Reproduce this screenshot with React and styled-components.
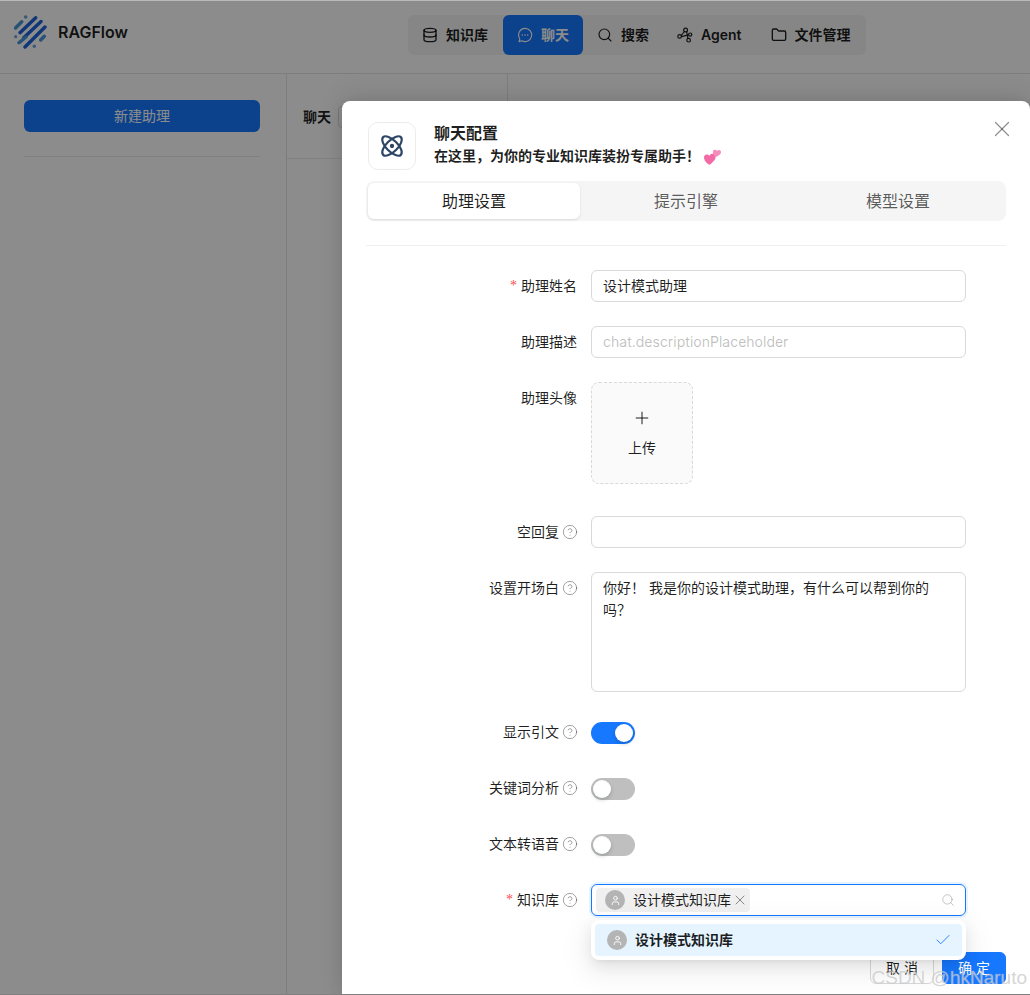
import React from 'react';
import styled, { createGlobalStyle } from 'styled-components';
import { Atom, Check, CircleHelp, Database, Folder, Plus, Search, User, X } from 'lucide-react';

const GlobalStyle = createGlobalStyle`
  html, body {
    margin: 0;
    padding: 0;
    background: #fff;
    overflow: hidden;
  }
  body {
    font-family: Inter, "Noto Sans CJK SC", sans-serif;
    font-size: 14px;
    line-height: 22px;
    color: rgba(0, 0, 0, 0.88);
  }
  * {
    box-sizing: border-box;
  }
`;

const Page = styled.div`
  position: relative;
  width: 1030px;
  height: 995px;
  overflow: hidden;
`;

const Header = styled.header`
  height: 74px;
  display: flex;
  align-items: flex-start;
  border-bottom: 1px solid #e4e4e4;
`;

const Brand = styled.div`
  width: 408px;
  display: flex;
  align-items: center;
  gap: 10px;
  padding: 15px 0 0 14px;
  font-size: 16px;
  font-weight: 600;
`;

const Nav = styled.nav`
  display: flex;
  width: 458px;
  height: 40px;
  margin-top: 15px;
  background: #f4f4f4;
  border-radius: 6px;
`;

const NavItem = styled.div`
  display: flex;
  align-items: center;
  gap: 8px;
  padding: 0 14px;
  border-radius: 6px;
  font-weight: 600;
  background: ${(p) => (p.$active ? '#1677ff' : 'transparent')};
  color: ${(p) => (p.$active ? '#fff' : 'rgba(0, 0, 0, 0.88)')};

  &:first-child,
  &:nth-child(4) {
    padding-right: 15px;
  }
`;

const Body = styled.div`
  display: flex;
  height: 921px;
`;

const Sidebar = styled.aside`
  width: 287px;
  padding: 26px 26px 0 24px;
  border-right: 1px solid #e4e4e4;
`;

const PrimaryWide = styled.div`
  height: 32px;
  background: #1677ff;
  border-radius: 6px;
  color: #fff;
  display: flex;
  align-items: center;
  justify-content: center;
`;

const SideDivider = styled.div`
  height: 1px;
  background: #eaeaea;
  margin-top: 24px;
`;

const ListColumn = styled.section`
  width: 221px;
  border-right: 1px solid #e4e4e4;
`;

const ListHead = styled.div`
  height: 85px;
  display: flex;
  align-items: center;
  gap: 7px;
  padding: 1px 0 0 16px;
  font-weight: 600;
  border-bottom: 1px solid #eaeaea;
`;

const Count = styled.span`
  width: 24px;
  height: 22px;
  border: 1px solid #d9d9d9;
  border-radius: 4px;
`;

const Mask = styled.div`
  position: absolute;
  inset: 0;
  background: rgba(0, 0, 0, 0.45);
`;

const Modal = styled.div`
  position: absolute;
  left: 342px;
  top: 101px;
  bottom: 0;
  width: 688px;
  padding: 21px 24px 0;
  background: #fff;
  border-radius: 8px 8px 0 0;
  box-shadow: 0 6px 16px rgba(0, 0, 0, 0.08), 0 -6px 24px rgba(0, 0, 0, 0.1);
`;

const CloseButton = styled.div`
  position: absolute;
  top: 15px;
  right: 15px;
  display: flex;
  color: rgba(0, 0, 0, 0.45);
`;

const ModalHead = styled.div`
  display: flex;
  align-items: flex-start;
  gap: 18px;
  padding-left: 2px;
`;

const IconBox = styled.div`
  width: 48px;
  height: 48px;
  display: flex;
  align-items: center;
  justify-content: center;
  border: 1px solid #ececec;
  border-radius: 10px;
  color: #2f4566;
`;

const HeadText = styled.div`
  display: flex;
  flex-direction: column;
  gap: 1px;
  margin-top: -1px;
`;

const ModalTitle = styled.div`
  font-size: 16px;
  font-weight: 600;
  line-height: 24px;
`;

const ModalSub = styled.div`
  display: flex;
  align-items: center;
  gap: 4px;
  font-size: 14px;
  font-weight: 600;
  line-height: 20px;
`;

const Tabs = styled.div`
  display: grid;
  grid-template-columns: repeat(3, 1fr);
  height: 40px;
  margin-top: 11px;
  padding: 2px;
  background: #f5f5f5;
  border-radius: 8px;
`;

const Tab = styled.div`
  display: flex;
  align-items: center;
  justify-content: center;
  font-size: 16px;
  border-radius: 6px;
  color: ${(p) => (p.$active ? 'rgba(0, 0, 0, 0.88)' : 'rgba(0, 0, 0, 0.65)')};
  background: ${(p) => (p.$active ? '#fff' : 'transparent')};
  box-shadow: ${(p) => (p.$active ? '0 1px 3px rgba(0, 0, 0, 0.08), 0 1px 2px rgba(0, 0, 0, 0.04)' : 'none')};
`;

const Divider = styled.div`
  height: 1px;
  background: #f0f0f0;
  margin: 24px 0;
`;

const Row = styled.div`
  display: grid;
  grid-template-columns: 211px 375px;
  column-gap: 14px;
  margin-bottom: ${(p) => p.$gap ?? 24}px;
`;

const Label = styled.div`
  height: 32px;
  display: flex;
  align-items: center;
  justify-content: flex-end;
  gap: 4px;
`;

const Star = styled.span`
  color: #ff4d4f;
  font-family: SimSun, "Liberation Serif", serif;
`;

const Help = styled.span`
  display: flex;
  margin: 0 -1px;
  color: rgba(0, 0, 0, 0.45);
`;

const Input = styled.div`
  height: 32px;
  padding: 0 11px;
  display: flex;
  align-items: center;
  border: 1px solid #d9d9d9;
  border-radius: 6px;
  color: ${(p) => (p.$placeholder ? 'rgba(0, 0, 0, 0.25)' : 'rgba(0, 0, 0, 0.88)')};
`;

const TextArea = styled.div`
  height: 120px;
  padding: 4px 11px;
  border: 1px solid #d9d9d9;
  border-radius: 6px;
  line-height: 22px;
`;

const Upload = styled.div`
  width: 102px;
  height: 102px;
  display: flex;
  flex-direction: column;
  align-items: center;
  justify-content: center;
  gap: 9px;
  background: #fafafa;
  border: 1px dashed #d9d9d9;
  border-radius: 8px;
`;

const SwitchTrack = styled.div`
  width: 44px;
  height: 22px;
  margin-top: 6px;
  padding: 2px;
  display: flex;
  justify-content: ${(p) => (p.$on ? 'flex-end' : 'flex-start')};
  border-radius: 11px;
  background: ${(p) => (p.$on ? '#1677ff' : '#bfbfbf')};
`;

const SwitchKnob = styled.div`
  width: 18px;
  height: 18px;
  border-radius: 50%;
  background: #fff;
  box-shadow: 0 2px 4px rgba(0, 35, 11, 0.2);
`;

const SelectWrap = styled.div`
  position: relative;
`;

const SelectBox = styled.div`
  height: 32px;
  padding: 0 10px 0 4px;
  display: flex;
  align-items: center;
  justify-content: space-between;
  border: 1px solid #1677ff;
  border-radius: 6px;
  box-shadow: 0 0 0 2px rgba(5, 145, 255, 0.1);
`;

const SelectTag = styled.div`
  height: 24px;
  padding: 0 2px 0 9px;
  display: flex;
  align-items: center;
  gap: 8px;
  background: #f0f0f0;
  border-radius: 4px;
`;

const TagClose = styled.span`
  display: flex;
  margin-left: -7px;
  color: rgba(0, 0, 0, 0.55);
`;

const Avatar = styled.span`
  width: 20px;
  height: 20px;
  display: flex;
  align-items: center;
  justify-content: center;
  border-radius: 50%;
  background: #b4b4b4;
  color: #fff;
`;

const Dropdown = styled.div`
  position: absolute;
  z-index: 2;
  top: 36px;
  left: 0;
  right: 0;
  padding: 4px;
  background: #fff;
  border-radius: 8px;
  box-shadow: 0 6px 16px rgba(0, 0, 0, 0.08), 0 3px 6px -4px rgba(0, 0, 0, 0.12), 0 9px 28px 8px rgba(0, 0, 0, 0.05);
`;

const Option = styled.div`
  height: 32px;
  padding: 0 12px;
  display: flex;
  align-items: center;
  gap: 8px;
  font-weight: 600;
  background: #e6f4ff;
  border-radius: 4px;
`;

const OptionCheck = styled.span`
  display: flex;
  margin: 0 -2px 0 auto;
  color: #1677ff;
`;

const Footer = styled.div`
  display: flex;
  justify-content: flex-end;
  gap: 8px;
  margin-top: 36px;
`;

const Button = styled.div`
  width: 64px;
  height: 32px;
  display: flex;
  align-items: center;
  justify-content: center;
  border-radius: 6px;
  border: 1px solid ${(p) => (p.$primary ? '#1677ff' : '#d9d9d9')};
  background: ${(p) => (p.$primary ? '#1677ff' : '#fff')};
  color: ${(p) => (p.$primary ? '#fff' : 'rgba(0, 0, 0, 0.88)')};
`;

const Watermark = styled.div`
  position: absolute;
  z-index: 3;
  right: 3px;
  bottom: 6px;
  font-family: "Liberation Sans", sans-serif;
  font-size: 19px;
  line-height: 22px;
  color: rgba(190, 190, 190, 0.65);
  text-shadow: 0 0 1px rgba(255, 255, 255, 0.5);
`;

const EdgeLine = styled.div`
  position: absolute;
  z-index: 4;
  left: 0;
  right: 0;
  height: 1px;
  top: ${(p) => (p.$bottom ? '994px' : '0')};
  background: ${(p) => (p.$bottom ? '#808080' : '#b9b9b9')};
`;

function Logo() {
  return (
    <svg width="34" height="34" viewBox="0 0 34 34" fill="none" strokeLinecap="round">
      <path d="M6 17.7L21.7 2.7M10 22.5L27 6.5M11 32L31 12" stroke="#1c63d8" strokeWidth="3.4" />
      <path d="M1.5 13L7.7 6.7M5 27.7L12 22M26.7 25L30.3 21.3" stroke="#4a94d8" strokeWidth="3.4" />
      <circle cx="11.7" cy="2" r="1.8" fill="#6aa3d8" />
      <circle cx="1.7" cy="21.7" r="1.6" fill="#6aa3d8" />
      <circle cx="20.3" cy="31.3" r="1.7" fill="#6aa3d8" />
    </svg>
  );
}

function ChatIcon() {
  return (
    <svg width="16" height="16" viewBox="0 0 16 16" fill="none" stroke="currentColor" strokeWidth="1.1">
      <path d="M8 1.4a6.6 6.6 0 1 1-3.1 12.4l-2.9.8.8-2.8A6.6 6.6 0 0 1 8 1.4z" strokeLinejoin="round" />
      <circle cx="5.3" cy="8" r="0.8" fill="currentColor" stroke="none" />
      <circle cx="8" cy="8" r="0.8" fill="currentColor" stroke="none" />
      <circle cx="10.7" cy="8" r="0.8" fill="currentColor" stroke="none" />
    </svg>
  );
}

function AgentIcon() {
  return (
    <svg width="16" height="16" viewBox="0 0 16 16" fill="none" stroke="currentColor" strokeWidth="1.2">
      <circle cx="2.6" cy="9.4" r="1.8" />
      <circle cx="8.6" cy="3" r="1.9" />
      <circle cx="13.2" cy="7.6" r="1.6" />
      <circle cx="11.6" cy="13.2" r="1.8" />
      <path d="M4.2 8.5L7.4 4.5M4.4 9.6L11.6 7.9M9.6 4.6L10.9 11.4" />
    </svg>
  );
}

function Hearts() {
  return (
    <svg width="17" height="17" viewBox="0 0 17 17">
      <path d="M5.5 16.8C2.5 15.2 0 12.4 0 9.2 0 6.4 3.6 5.3 5.4 7.7 6.8 4.9 11 5.2 11.6 8 12.2 11.3 8.7 14.5 5.5 16.8z" fill="#f26ba6" />
      <path d="M12 9C10.3 7.7 8.5 5.7 8.9 3.5 9.3 1.4 12 1.1 13 2.9 14.2 1.2 17 1.8 17 3.9 17 6.3 14.3 7.7 12 9z" fill="#f58cbb" />
    </svg>
  );
}

function HelpMark() {
  return (
    <Help>
      <CircleHelp size={16} strokeWidth={1.2} />
    </Help>
  );
}

function FormLabel({ text, required, help }) {
  return (
    <Label>
      {required && <Star>*</Star>}
      <span>{text}</span>
      {help && <HelpMark />}
    </Label>
  );
}

function SwitchRow({ text, on }) {
  return (
    <Row>
      <FormLabel text={text} help />
      <SwitchTrack $on={on}>
        <SwitchKnob />
      </SwitchTrack>
    </Row>
  );
}

export default function App() {
  return (
    <Page>
      <GlobalStyle />
      <Header>
        <Brand>
          <Logo />
          RAGFlow
        </Brand>
        <Nav>
          <NavItem><Database size={16} />知识库</NavItem>
          <NavItem $active><ChatIcon />聊天</NavItem>
          <NavItem><Search size={16} strokeWidth={1.7} />搜索</NavItem>
          <NavItem><AgentIcon />Agent</NavItem>
          <NavItem><Folder size={16} />文件管理</NavItem>
        </Nav>
      </Header>
      <Body>
        <Sidebar>
          <PrimaryWide>新建助理</PrimaryWide>
          <SideDivider />
        </Sidebar>
        <ListColumn>
          <ListHead>聊天<Count /></ListHead>
        </ListColumn>
      </Body>
      <Mask />
      <Modal>
        <CloseButton><X size={26} strokeWidth={1.1} /></CloseButton>
        <ModalHead>
          <IconBox><Atom size={26} strokeWidth={2} /></IconBox>
          <HeadText>
            <ModalTitle>聊天配置</ModalTitle>
            <ModalSub>在这里，为你的专业知识库装扮专属助手！<Hearts /></ModalSub>
          </HeadText>
        </ModalHead>
        <Tabs>
          <Tab $active>助理设置</Tab>
          <Tab>提示引擎</Tab>
          <Tab>模型设置</Tab>
        </Tabs>
        <Divider />
        <Row>
          <FormLabel text="助理姓名" required />
          <Input>设计模式助理</Input>
        </Row>
        <Row>
          <FormLabel text="助理描述" />
          <Input $placeholder>chat.descriptionPlaceholder</Input>
        </Row>
        <Row $gap={32}>
          <FormLabel text="助理头像" />
          <Upload>
            <Plus size={20} strokeWidth={1.2} />
            上传
          </Upload>
        </Row>
        <Row>
          <FormLabel text="空回复" help />
          <Input />
        </Row>
        <Row>
          <FormLabel text="设置开场白" help />
          <TextArea>你好！ 我是你的设计模式助理，有什么可以帮到你的吗？</TextArea>
        </Row>
        <SwitchRow text="显示引文" on />
        <SwitchRow text="关键词分析" />
        <SwitchRow text="文本转语音" />
        <Row $gap={0}>
          <FormLabel text="知识库" required help />
          <SelectWrap>
            <SelectBox>
              <SelectTag>
                <Avatar><User size={11} /></Avatar>
                设计模式知识库
                <TagClose><X size={16} strokeWidth={1.2} /></TagClose>
              </SelectTag>
              <Search size={14} strokeWidth={1.5} color="rgba(0, 0, 0, 0.25)" />
            </SelectBox>
            <Dropdown>
              <Option>
                <Avatar><User size={11} /></Avatar>
                设计模式知识库
                <OptionCheck><Check size={18} strokeWidth={1.2} /></OptionCheck>
              </Option>
            </Dropdown>
          </SelectWrap>
        </Row>
        <Footer>
          <Button>取 消</Button>
          <Button $primary>确 定</Button>
        </Footer>
      </Modal>
      <Watermark>CSDN @hkNaruto</Watermark>
      <EdgeLine />
      <EdgeLine $bottom />
    </Page>
  );
}
